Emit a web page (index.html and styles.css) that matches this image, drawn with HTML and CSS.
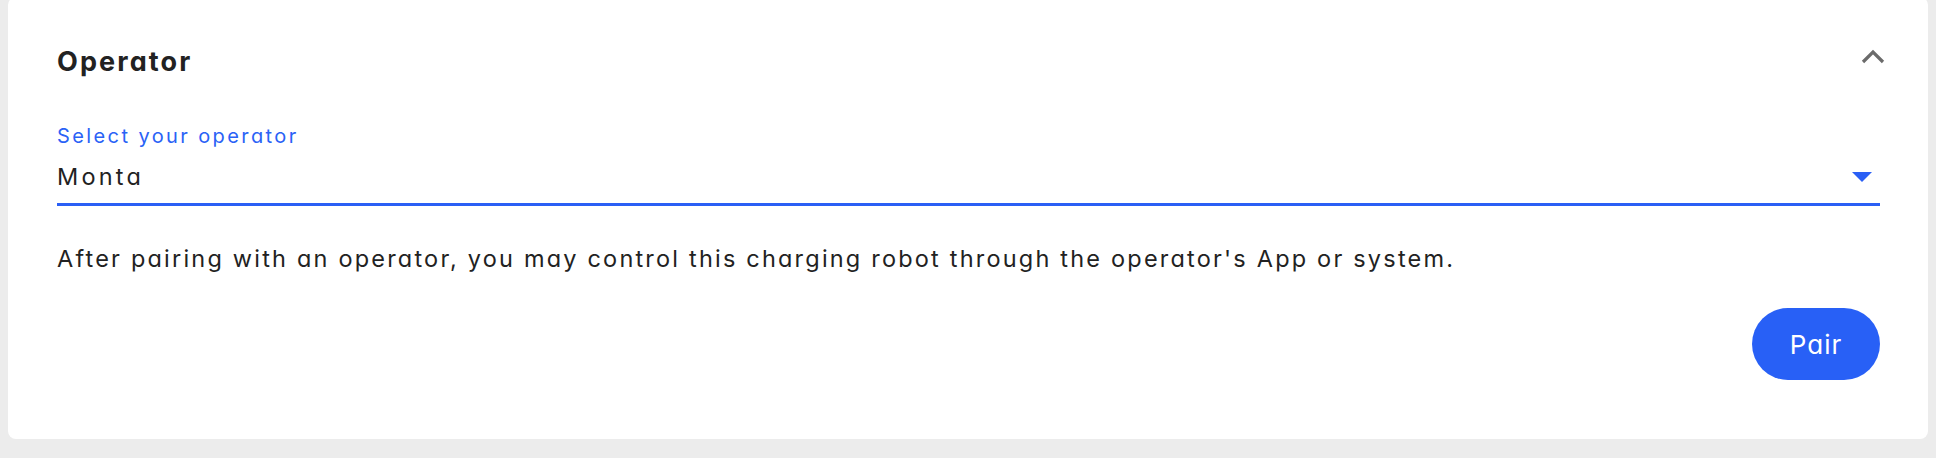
FILE: index.html
```html
<!DOCTYPE html>
<html lang="en">
<head>
<meta charset="utf-8">
<title>Operator</title>
<link rel="stylesheet" href="styles.css">
</head>
<body>
<section class="card">
  <header class="card-header">
    <h2 class="title">Operator</h2>
    <button class="collapse" aria-label="Collapse">
      <svg width="24" height="16" viewBox="0 0 24 16"><path d="M2 14 L12 4 L22 14" fill="none" stroke="#6b6b6b" stroke-width="3.2"/></svg>
    </button>
  </header>
  <div class="field">
    <label class="field-label">Select your operator</label>
    <div class="select">
      <span class="select-value">Monta</span>
      <span class="caret"></span>
    </div>
  </div>
  <p class="desc">After pairing with an operator, you may control this charging robot through the operator's App or system.</p>
  <div class="actions">
    <button class="pair">Pair</button>
  </div>
</section>
</body>
</html>
```
FILE: styles.css
```css
html, body {
  margin: 0;
  padding: 0;
}
body {
  background: #ececec;
  padding: 0 8px;
  height: 458px;
  box-sizing: border-box;
  font-family: Inter, "Noto Sans", sans-serif;
  font-feature-settings: "cv11";
  color: #222222;
}
.card {
  background: #ffffff;
  border-radius: 8px;
  margin-top: -3px;
  height: 442px;
  box-sizing: border-box;
  padding: 47px 48px 0 49px;
}
.card-header {
  display: flex;
  align-items: center;
  justify-content: space-between;
  height: 36px;
}
.title {
  margin: 0;
  font-size: 27px;
  line-height: 36px;
  font-weight: 700;
  letter-spacing: 2.1px;
  color: #222222;
}
.collapse {
  border: 0;
  background: none;
  padding: 0;
  margin: 0 -5px 12px 0;
  width: 24px;
  height: 16px;
  display: flex;
}
.field {
  margin-top: 42px;
  display: flex;
  flex-direction: column;
}
.field-label {
  font-size: 20px;
  line-height: 28px;
  letter-spacing: 2.4px;
  color: #2a62f6;
}
.select {
  margin-top: 11px;
  display: flex;
  align-items: center;
  justify-content: space-between;
  padding-bottom: 10px;
  border-bottom: 3px solid #2a5ff5;
}
.select-value {
  font-size: 23.5px;
  line-height: 32px;
  letter-spacing: 3.2px;
  color: #222222;
}
.caret {
  width: 0;
  height: 0;
  border-left: 10px solid transparent;
  border-right: 10px solid transparent;
  border-top: 10px solid #2a5ff5;
  margin-right: 8px;
}
.desc {
  margin: 39px 0 0;
  font-size: 23.5px;
  line-height: 28px;
  letter-spacing: 2.2px;
  color: #222222;
}
.actions {
  display: flex;
  justify-content: flex-end;
  margin-top: 35px;
}
.pair {
  width: 128px;
  height: 72px;
  border: 0;
  border-radius: 36px;
  background: #2860f6;
  color: #ffffff;
  font-family: Inter, "Noto Sans", sans-serif;
  font-feature-settings: "cv11";
  font-size: 26px;
  letter-spacing: 1px;
  padding: 0;
}
```
